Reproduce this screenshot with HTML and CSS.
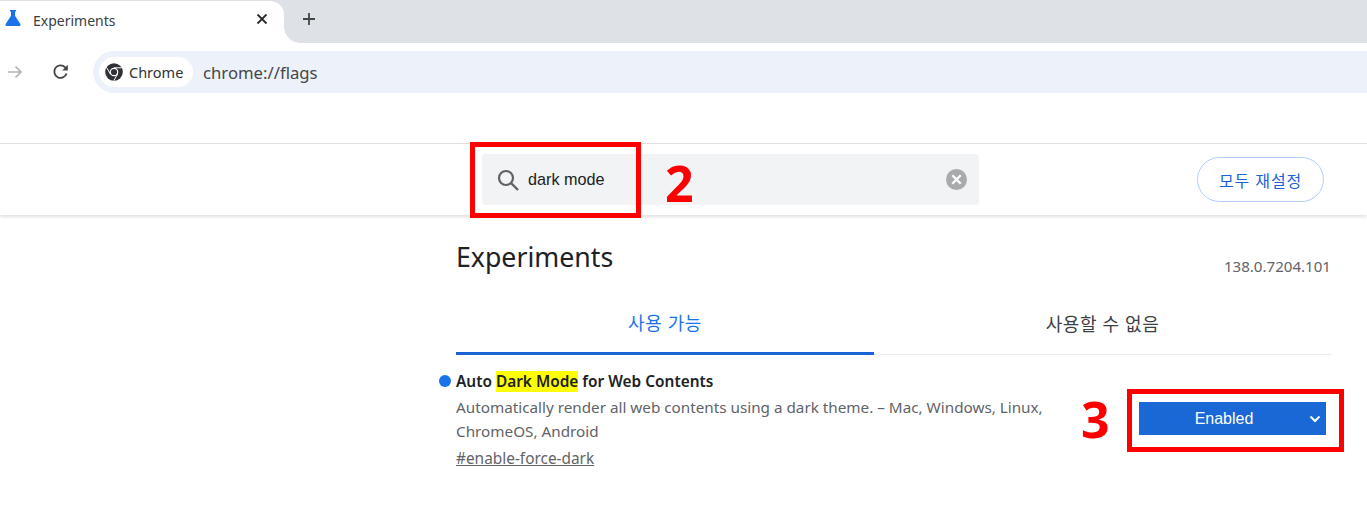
FILE: index.html
```html
<!DOCTYPE html>
<html lang="ko">
<head>
<meta charset="utf-8">
<title>Experiments</title>
<link rel="stylesheet" href="styles.css">
</head>
<body>
<div class="tabstrip">
  <div class="tab">
    <svg class="flask" width="16" height="16" viewBox="0 0 16 16"><path d="M5 0h6v1.500h-1v4.200L15.500 14.200Q16 16 14.500 16H1.500Q0 16 .5 14.200L6 5.700V1.500H5z" fill="#1a73e8"/></svg>
    <span class="tab-title">Experiments</span>
    <svg class="tab-close" width="12" height="12" viewBox="0 0 12 12"><path d="M1.500 1.500l9 9M10.500 1.500l-9 9" stroke="#2b2b2b" stroke-width="1.800"/></svg>
  </div>
  <svg class="new-tab" width="14" height="14" viewBox="0 0 14 14"><path d="M7 1v12M1 7h12" stroke="#444746" stroke-width="1.800"/></svg>
</div>
<div class="toolbar">
  <svg class="nav-forward" width="16" height="16" viewBox="0 0 16 16"><path d="M1 8h13M8.500 2.500L14 8l-5.500 5.500" fill="none" stroke="#b0b2b4" stroke-width="1.600"/></svg>
  <svg class="nav-reload" width="18" height="18" viewBox="0 0 18 18"><path d="M14.600 10.500A6.300 6.300 0 1 1 13.200 4.300L15 6" fill="none" stroke="#444746" stroke-width="1.800"/><path d="M15.800 1.800v5.600h-5.600z" fill="#444746"/></svg>
  <div class="omnibox">
    <div class="chip">
      <svg width="18" height="18" viewBox="0 0 18 18"><circle cx="9" cy="9" r="8.800" fill="#303134"/><circle cx="9" cy="9" r="4.300" fill="#fff"/><circle cx="9" cy="9" r="3.100" fill="#303134"/><path d="M9 4.800h7.600M5.400 11.100L1.600 4.500M12.600 11.100L8.800 17.600" stroke="#fff" stroke-width="1"/></svg>
      <span>Chrome</span>
    </div>
    <span class="url">chrome://flags</span>
  </div>
</div>
<div class="bookmark-gap"></div>
<header class="flags-header">
  <div class="search">
    <svg class="search-icon" width="24" height="24" viewBox="0 0 24 24"><circle cx="10" cy="10" r="7" fill="none" stroke="#5f6368" stroke-width="2.200"/><path d="M15 15l7 7" stroke="#5f6368" stroke-width="2.400"/></svg>
    <span class="search-text">dark mode</span>
    <svg class="search-clear" width="21" height="21" viewBox="0 0 20 20"><circle cx="10" cy="10" r="10" fill="#a8abae"/><path d="M6 6l8 8M14 6l-8 8" stroke="#fff" stroke-width="2.200"/></svg>
  </div>
  <button class="reset">모두 재설정</button>
</header>
<main class="content">
  <div class="title-row">
    <h1>Experiments</h1>
    <span class="version">138.0.7204.101</span>
  </div>
  <div class="tabs">
    <div class="flag-tab active">사용 가능</div>
    <div class="flag-tab">사용할 수 없음</div>
  </div>
  <div class="flag">
    <span class="dot"></span>
    <div class="flag-text">
      <h2>Auto <mark>Dark Mode</mark> for Web Contents</h2>
      <p>Automatically render all web contents using a dark theme. – Mac, Windows, Linux, ChromeOS, Android</p>
      <a class="flag-link">#enable-force-dark</a>
    </div>
    <div class="select">Enabled
      <svg class="chevron" width="12" height="8" viewBox="0 0 12 8"><path d="M1.500 1.500L6 6l4.500-4.500" fill="none" stroke="#fff" stroke-width="2"/></svg>
    </div>
  </div>
</main>
<div class="mark-box box-search"></div>
<span class="mark-num num-2">2</span>
<div class="mark-box box-select"></div>
<span class="mark-num num-3">3</span>
</body>
</html>
```
FILE: styles.css
```css
* { box-sizing: border-box; }
html, body { margin: 0; height: 527px; overflow: hidden; background: #fff; }
body { font-family: "Noto Sans", "Noto Sans CJK KR", sans-serif; color: #202124; position: relative; }
.tabstrip { height: 43px; background: #dee1e6; display: flex; align-items: flex-start; padding-top: 1px; }
.tab { width: 284px; height: 42px; background: #fff; border-radius: 0 14px 0 0; display: flex; align-items: flex-start; padding: 0 0 0 5px; position: relative; }
.tab::after { content: ""; position: absolute; left: 284px; bottom: 0; width: 16px; height: 16px; background: radial-gradient(circle at 100% 0, transparent 15.5px, #fff 16px); }
.flask { margin-top: 9px; }
.tab-title { font-size: 14px; line-height: 20px; margin: 10px 0 0 12px; color: #3c4043; width: 223px; }
.tab-close { margin-top: 12px; }
.new-tab { margin: 11px 0 0 18px; }
.toolbar { height: 57px; padding: 8px 0 7px 7px; display: flex; align-items: center; background: #fff; }
.nav-forward { flex: none; }
.nav-reload { flex: none; margin-left: 29px; margin-right: 23px; }
.omnibox { flex: 1; height: 42px; background: #edf2fa; border-radius: 21px 0 0 21px; display: flex; align-items: center; padding-left: 6px; }
.chip { height: 30px; width: 94px; background: #fff; border-radius: 15px; display: flex; align-items: center; gap: 6px; padding-left: 6px; font-size: 14.500px; color: #303134; }
.url { font-size: 16.700px; margin-left: 10px; color: #44474a; }
.bookmark-gap { height: 43px; }
.flags-header { height: 72px; border-top: 1px solid #e0e0e0; box-shadow: 0 2px 3px rgba(0,0,0,.12); display: flex; align-items: flex-start; padding: 10px 43px 0 482px; background: #fff; }
.search { width: 497px; height: 51px; background: #f1f3f4; border-radius: 4px; display: flex; align-items: center; padding: 0 12px 0 14px; }
.search-icon { flex: none; }
.search-text { flex: 1; font-family: "Liberation Sans", sans-serif; font-size: 16.200px; margin-left: 8px; color: #202124; }
.search-clear { flex: none; }
.reset { margin: 3px 0 0 auto; width: 127px; height: 45px; border-radius: 23px; border: 1px solid #b3cdf6; background: #fff; color: #1a62d6; font-family: "Noto Sans CJK KR", sans-serif; font-size: 16px; letter-spacing: .8px; padding: 0; }
.content { margin-left: 456px; width: 875px; }
.title-row { display: flex; justify-content: space-between; align-items: flex-start; height: 77px; }
h1 { margin: 22px 0 0; font-size: 26.700px; font-weight: 400; line-height: 40px; color: #202124; }
.version { font-size: 15.100px; line-height: 20px; margin-top: 41px; color: #5f6368; }
.tabs { display: flex; height: 63px; border-bottom: 1px solid #e8eaed; }
.flag-tab { flex: 1; display: flex; justify-content: center; align-items: center; font-family: "Noto Sans CJK KR", sans-serif; font-size: 18px; letter-spacing: .5px; color: #3c4043; }
.flag-tab.active { flex: none; width: 418px; color: #1a73e8; border-bottom: 3px solid #1a62d6; margin-bottom: -1px; }
.flag { display: flex; position: relative; padding-top: 16px; }
.dot { position: absolute; left: -17px; top: 20px; width: 12px; height: 12px; border-radius: 50%; background: #1a73e8; }
.flag-text { width: 600px; }
h2 { margin: 0; font-size: 15.400px; line-height: 22px; font-weight: 600; color: #202124; }
mark { background: #ffff00; color: inherit; }
p { margin: 2px 0 0; font-size: 15.250px; line-height: 24px; color: #5f6368; }
.flag-link { display: block; margin-top: 4px; font-size: 15.400px; line-height: 24px; color: #5f6368; text-decoration: underline; }
.select { margin: 31px 0 0 83px; width: 187px; height: 33px; background: #1a68d6; color: #fff; font-family: "Liberation Sans", sans-serif; font-size: 16px; display: flex; align-items: center; justify-content: center; padding-right: 17px; position: relative; }
.chevron { position: absolute; right: 5px; top: 13px; }
.mark-box { position: absolute; border: 5px solid #ff0000; }
.box-search { left: 470px; top: 142px; width: 171px; height: 76px; }
.box-select { left: 1127px; top: 389px; width: 217px; height: 63px; }
.mark-num { position: absolute; font-family: "Noto Sans", sans-serif; font-weight: 700; color: #ff0000; font-size: 50px; line-height: 60px; }
.num-2 { left: 665px; top: 153px; }
.num-3 { left: 1081px; top: 389px; }
```
